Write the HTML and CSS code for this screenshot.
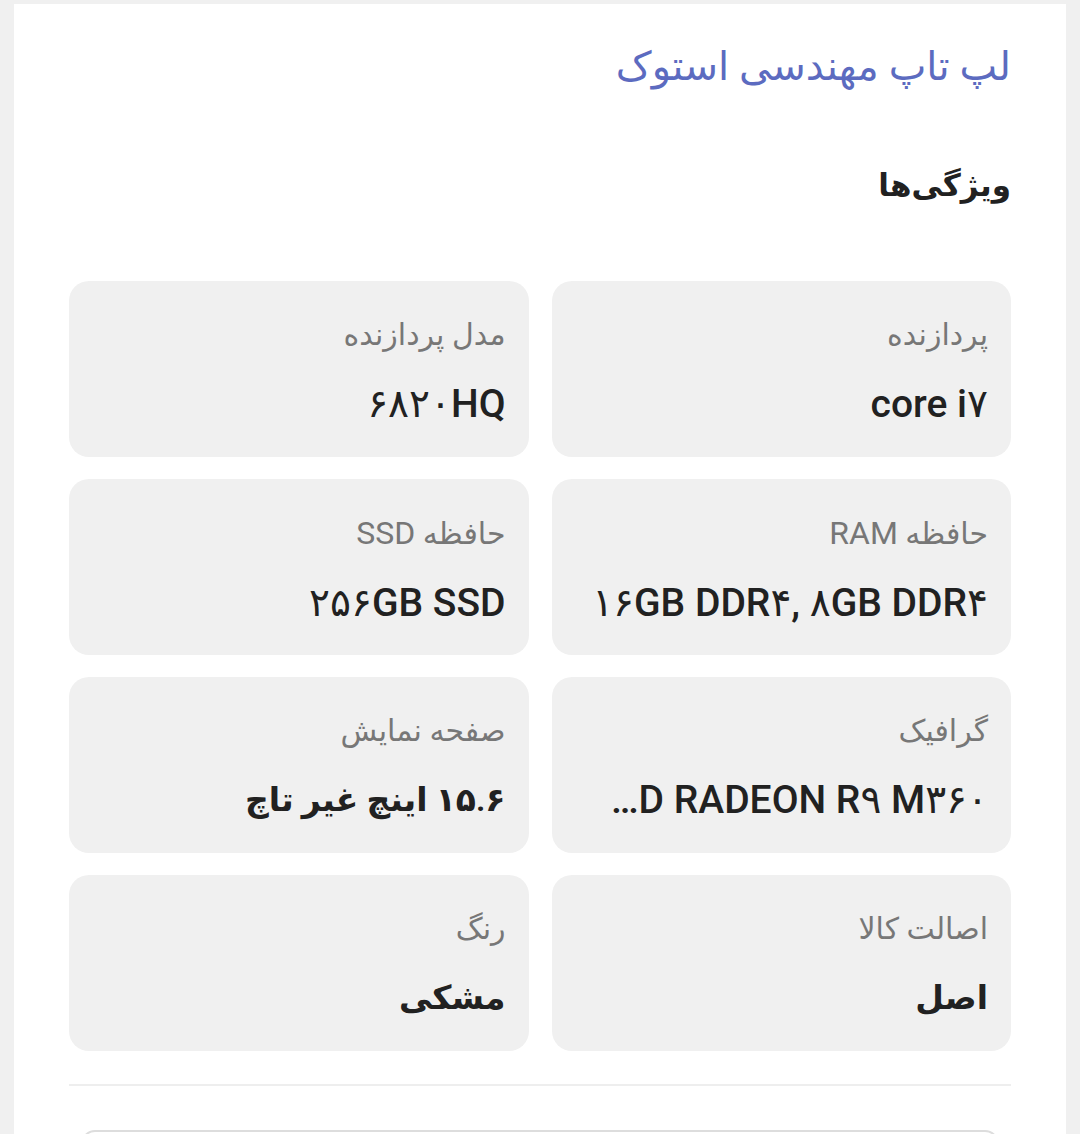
FILE: index.html
```html
<!DOCTYPE html>
<html lang="fa" dir="rtl">
<head>
<meta charset="utf-8">
<link rel="stylesheet" href="styles.css">
</head>
<body>
<div class="page">
  <div class="card">
    <div class="title">لپ تاپ مهندسی استوک</div>
    <h2 class="heading">ویژگی‌ها</h2>
    <div class="grid">
      <div class="spec"><div class="label">پردازنده</div><div class="value">core i۷</div></div>
      <div class="spec"><div class="label">مدل پردازنده</div><div class="value">۶۸۲۰HQ</div></div>
      <div class="spec"><div class="label">حافظه <span class="lat">RAM</span></div><div class="value">۱۶GB DDR۴, ۸GB DDR۴</div></div>
      <div class="spec"><div class="label">حافظه <span class="lat">SSD</span></div><div class="value">۲۵۶GB SSD</div></div>
      <div class="spec"><div class="label">گرافیک</div><div class="value">AMD RADEON R۹ M۳۶۰</div></div>
      <div class="spec"><div class="label">صفحه نمایش</div><div class="value value-fa">۱۵.۶ اینچ غیر تاچ</div></div>
      <div class="spec"><div class="label">اصالت کالا</div><div class="value value-fa">اصل</div></div>
      <div class="spec"><div class="label">رنگ</div><div class="value value-fa">مشکی</div></div>
    </div>
    <hr class="divider">
    <div class="next-box"></div>
  </div>
</div>
</body>
</html>
```

FILE: styles.css
```css
html, body {
  margin: 0;
  padding: 0;
  background: #f0f0f0;
  height: 100%;
  overflow: hidden;
}
body {
  font-family: Roboto, "DejaVu Sans", sans-serif;
  direction: rtl;
  color: #212121;
}
.page {
  padding: 4px 14px 0 14px;
}
.card {
  background: #ffffff;
  padding: 38px 55px 0 55px;
  min-height: 1200px;
}
.title {
  font-size: 40px;
  line-height: 50px;
  color: #5c6bc0;
}
.heading {
  margin: 70px 0 0 0;
  font-size: 31px;
  line-height: 48px;
  font-weight: 700;
  color: #212121;
}
.grid {
  margin-top: 71px;
  display: grid;
  grid-template-columns: 1fr 1fr;
  column-gap: 23px;
  row-gap: 22px;
}
.spec {
  background: #f0f0f0;
  border-radius: 20px;
  height: 176px;
  box-sizing: border-box;
  padding: 33px 23px 0 29px;
  min-width: 0;
}
.label {
  font-size: 30px;
  line-height: 42px;
  color: #777777;
}
.lat {
  font-size: 32px;
}
.value {
  margin-top: 24px;
  font-size: 39px;
  line-height: 48px;
  font-weight: 500;
  color: #212121;
  white-space: nowrap;
  overflow: hidden;
  text-overflow: ellipsis;
}
.value-fa {
  font-weight: 600;
  font-size: 33px;
}
.divider {
  margin: 33px 0 0 0;
  border: 0;
  height: 2px;
  background: #eeeeee;
}
.next-box {
  margin: 44px 12px 0 12px;
  height: 60px;
  border: 2px solid #dddddd;
  border-radius: 14px;
}
```
